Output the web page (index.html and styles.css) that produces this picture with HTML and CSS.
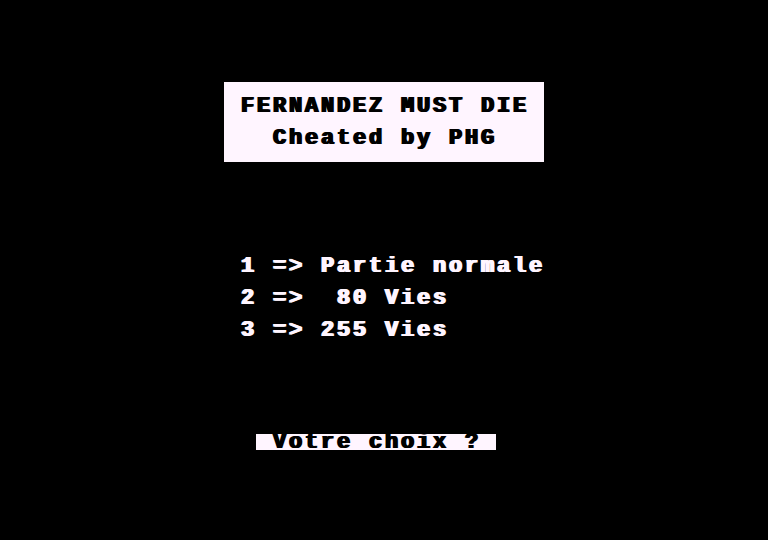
FILE: index.html
```html
<!DOCTYPE html>
<html lang="fr">
<head>
  <meta charset="UTF-8" />
  <meta name="viewport" content="width=device-width, initial-scale=1.0"/>
  <title>Fernandez Must Die</title>
  <link rel="stylesheet" href="styles.css">
</head>
<body>
<main class="screen">
  <div class="title-box">
    <p class="line">FERNANDEZ MUST DIE</p>
    <p class="line">Cheated by PHG</p>
  </div>

  <ul class="menu">
    <li class="line">1 =&gt; Partie normale</li>
    <li class="line">2 =&gt;  80 Vies</li>
    <li class="line">3 =&gt; 255 Vies</li>
  </ul>

  <p class="prompt line"> Votre choix ? </p>
</main>
</body>
</html>
```

FILE: styles.css
```css
/* one text cell = 16x16, every line of text sits on that grid */
body { margin: 0; padding: 0; background-color: #000; }
.screen { width: 768px; height: 540px; overflow: hidden; display: flex; flex-direction: column; align-items: flex-start; color: #fff5ff; font-family: "Liberation Mono", "DejaVu Sans Mono", monospace; font-weight: bold; font-size: 22px; letter-spacing: 2.8px; }
/* line-height a bit over the row so the caps sit inside the cell; shadows fatten the strokes */
.line { margin: 0; height: 16px; line-height: 18px; white-space: pre; text-shadow: 1px 0 currentColor, 2px 0 currentColor; }

.title-box { margin: 82px 0 0 224px; width: 320px; padding: 16px 0; display: flex; flex-direction: column; align-items: center; gap: 16px; background-color: #fff5ff; color: #000; }

.menu { list-style: none; margin: 96px 0 0 240px; padding: 0; display: flex; flex-direction: column; gap: 16px; }

/* inverse video prompt */
.prompt { margin: 96px 0 0 256px; background-color: #fff5ff; color: #000; }
```
